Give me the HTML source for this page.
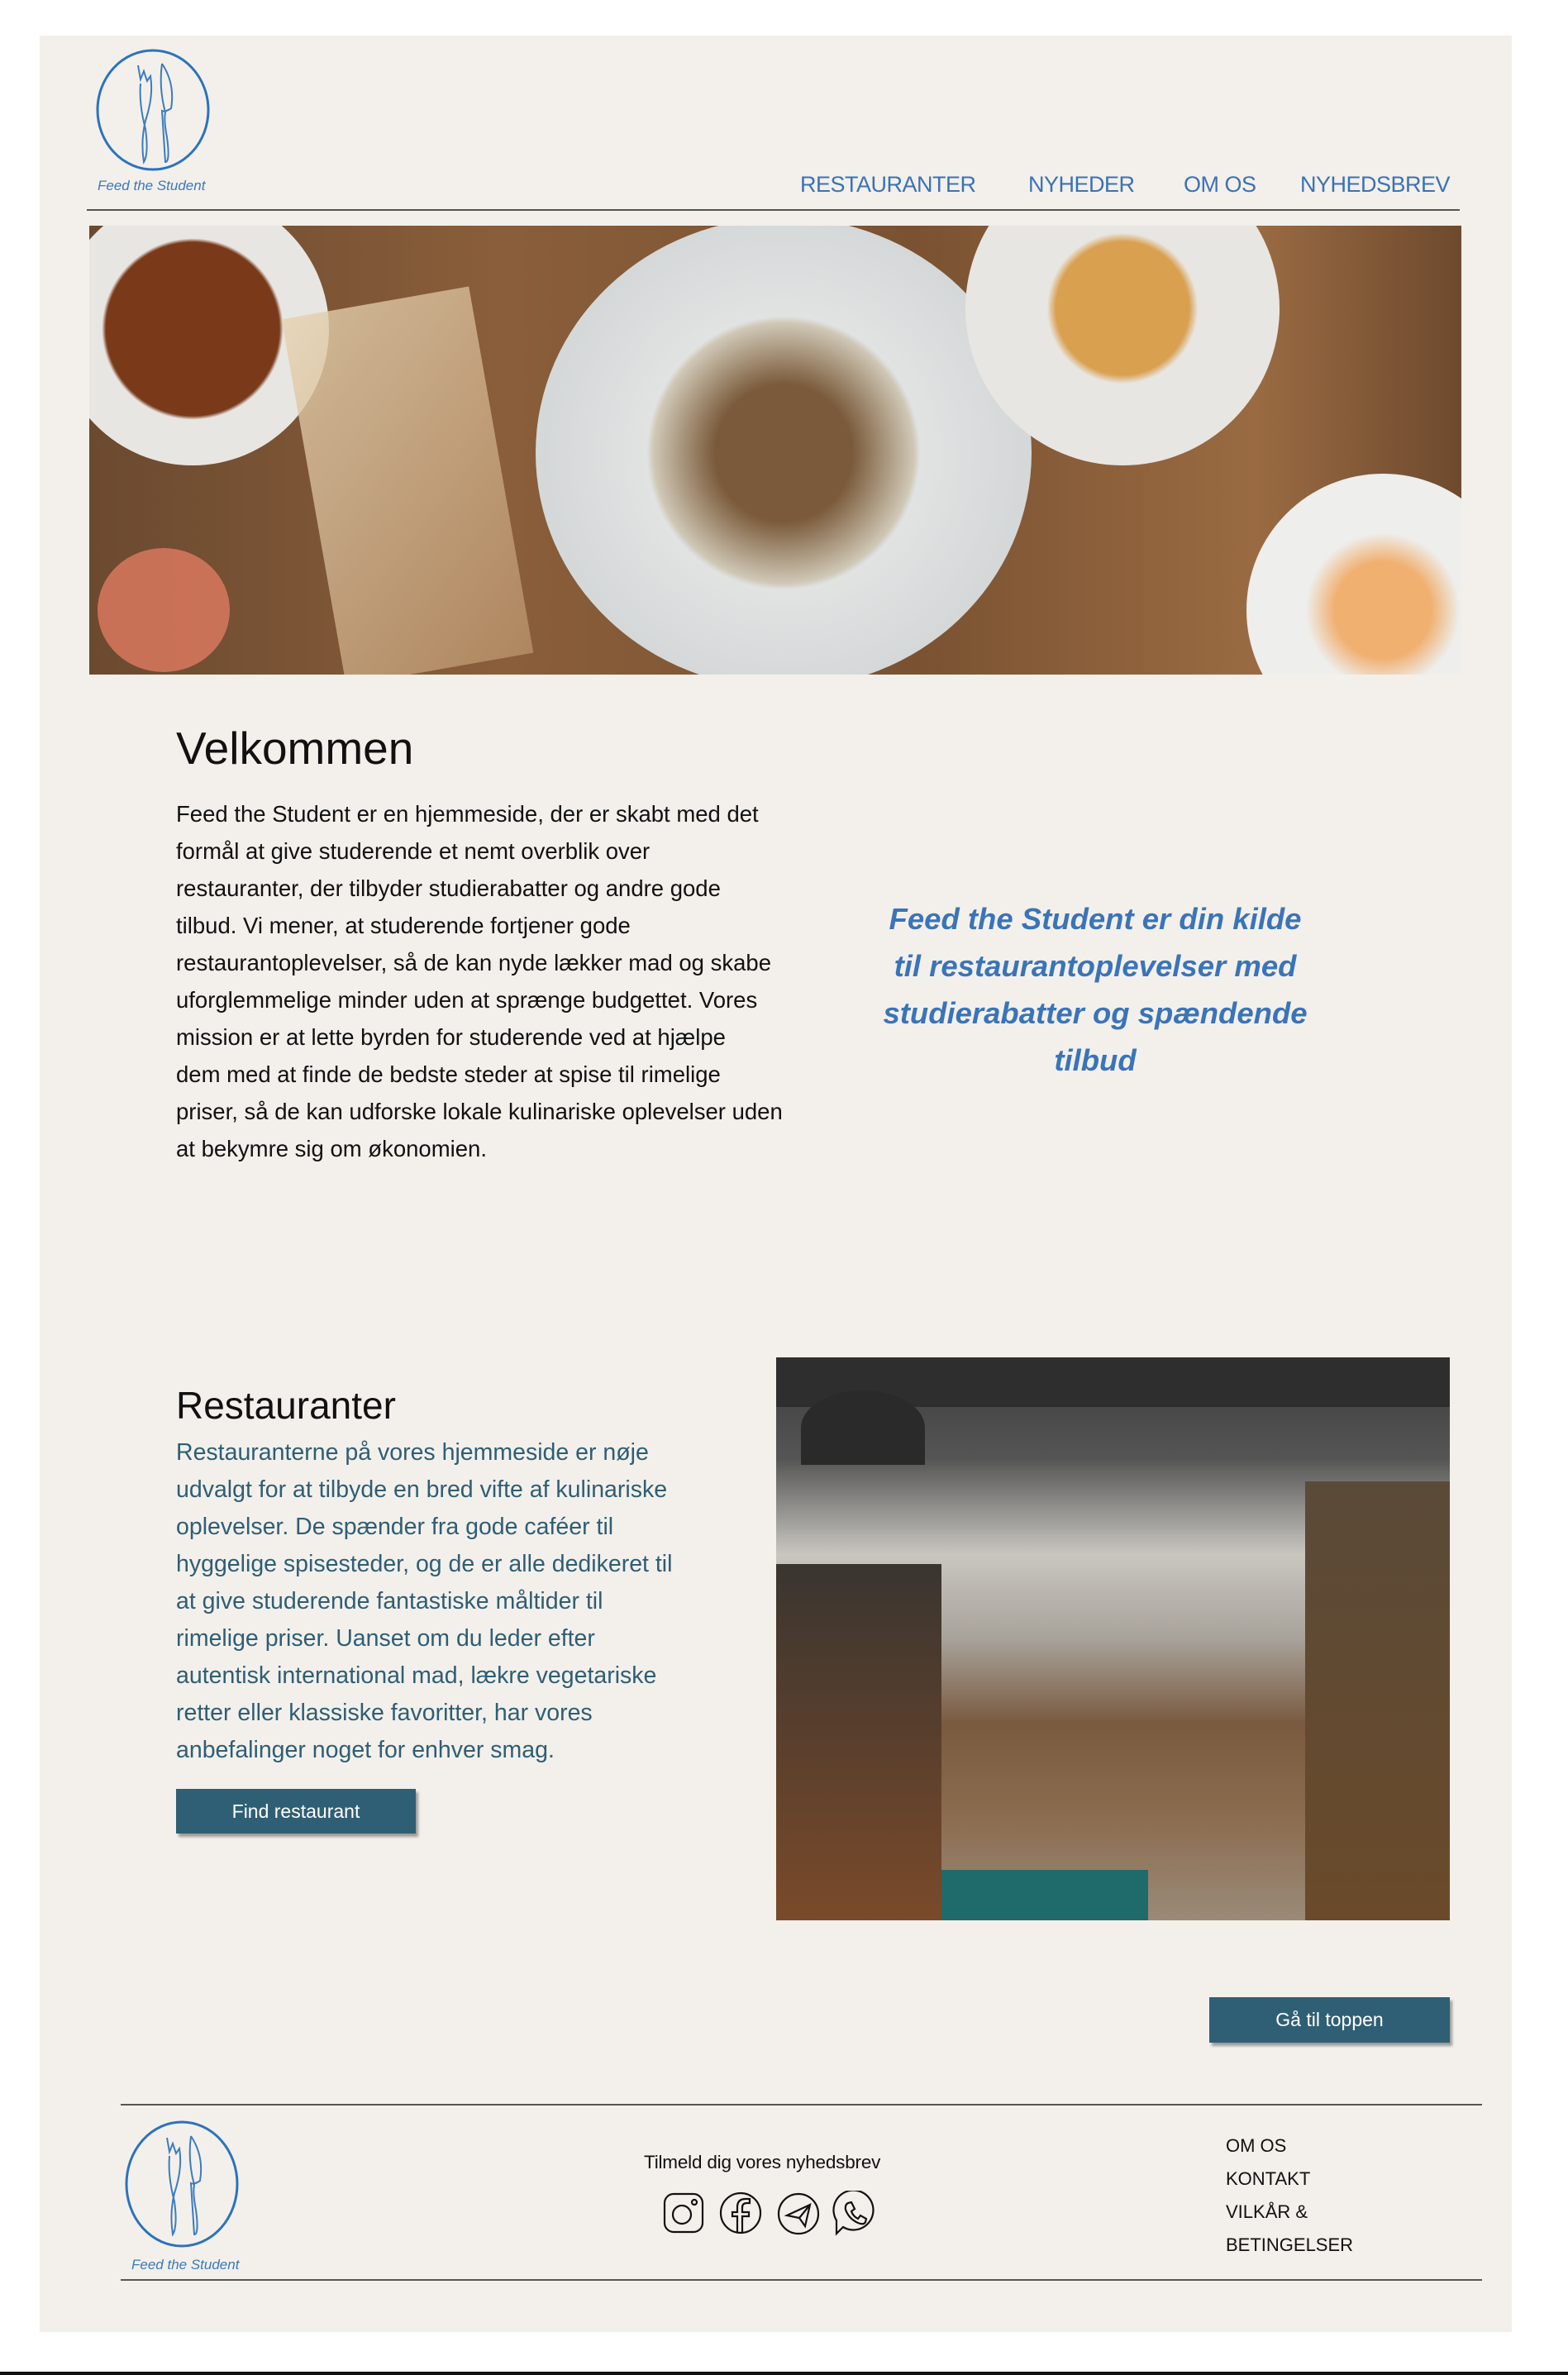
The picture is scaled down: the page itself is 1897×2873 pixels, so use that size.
<!DOCTYPE html>
<html><head><meta charset="utf-8"><style>
*{margin:0;padding:0;box-sizing:border-box}
body{width:1897px;height:2873px;background:#fff;position:relative;overflow:hidden;font-family:"Liberation Sans",sans-serif}
.card{position:absolute;left:48px;top:43px;width:1781px;height:2778px;background:#f3f0eb}
.a{position:absolute;white-space:nowrap}
.nav{color:#3b72b3;font-size:27px;top:208px;letter-spacing:-0.5px}
.line{position:absolute;height:2px;background:#555}
.p{line-height:45px;color:#111}
.btn{position:absolute;background:#2f5f74;color:#fff;font-size:23px;text-align:center;box-shadow:3px 4px 3px rgba(0,0,0,.35)}
.logotext{font-style:italic;color:#3b79b9;font-size:17px}
.bottom{position:absolute;left:0;top:2869px;width:1897px;height:4px;background:#111}
</style></head><body>
<div class="card"></div>

<svg class="a" style="left:112px;top:56px" width="150" height="155" viewBox="0 0 150 155">
<ellipse cx="73" cy="77" rx="67" ry="72" fill="none" stroke="#2b73bd" stroke-width="3"/>
<path d="M55 23 L58 40 L62 30 L66 42 L70 36 Q74 60 64 90 Q58 115 62 140 Q68 130 64 100 Q56 70 58 45" fill="none" stroke="#3b7cc0" stroke-width="2"/>
<path d="M84 21 Q100 45 95 75 Q88 80 84 78 Q86 110 88 140 Q94 140 90 110 Q86 90 88 80 Q80 50 84 21" fill="none" stroke="#3b7cc0" stroke-width="2"/>
</svg>
<div class="a logotext" style="left:118px;top:215px">Feed the Student</div>

<div class="a nav" style="left:968px">RESTAURANTER</div>
<div class="a nav" style="left:1244px">NYHEDER</div>
<div class="a nav" style="left:1432px">OM OS</div>
<div class="a nav" style="left:1573px">NYHEDSBREV</div>
<div class="line" style="left:105px;top:253px;width:1661px"></div>

<div class="a" style="left:108px;top:273px;width:1660px;height:543px;overflow:hidden;background:linear-gradient(90deg,#6b4a30,#8a5e3a 30%,#7a5232 60%,#9a6b42 85%,#6e4a2e)">
 <div class="a" style="left:-40px;top:-40px;width:330px;height:330px;border-radius:50%;background:radial-gradient(circle,#7a3a1a 45%,#e8e6e2 47%)"></div>
 <div class="a" style="left:540px;top:-10px;width:600px;height:570px;border-radius:50%;background:radial-gradient(circle,#7a5a3a 20%,#cfc7b5 38%,#e1e3e3 40%,#d5d8d8 70%)"></div>
 <div class="a" style="left:1060px;top:-90px;width:380px;height:380px;border-radius:50%;background:radial-gradient(circle,#d9a050 30%,#e8e6e2 34%)"></div>
 <div class="a" style="left:1400px;top:300px;width:330px;height:330px;border-radius:50%;background:radial-gradient(circle,#f0b070 25%,#eeeeec 40%)"></div>
 <div class="a" style="left:270px;top:90px;width:230px;height:450px;background:linear-gradient(135deg,#e6d2b0,#b89068);transform:rotate(-10deg);opacity:.8"></div>
 <div class="a" style="left:10px;top:390px;width:160px;height:150px;border-radius:50%;background:#e07a60;opacity:.8"></div>
</div>

<div class="a" style="left:213px;top:873px;font-size:55px;color:#111">Velkommen</div>
<div class="a p" style="left:213px;top:962px;font-size:27.5px">Feed the Student er en hjemmeside, der er skabt med det<br>formål at give studerende et nemt overblik over<br>restauranter, der tilbyder studierabatter og andre gode<br>tilbud. Vi mener, at studerende fortjener gode<br>restaurantoplevelser, så de kan nyde lækker mad og skabe<br>uforglemmelige minder uden at sprænge budgettet. Vores<br>mission er at lette byrden for studerende ved at hjælpe<br>dem med at finde de bedste steder at spise til rimelige<br>priser, så de kan udforske lokale kulinariske oplevelser uden<br>at bekymre sig om økonomien.</div>
<div class="a" style="left:1005px;top:1083px;width:640px;text-align:center;font-size:36.5px;line-height:57px;font-style:italic;font-weight:bold;color:#3a74b8">Feed the Student er din kilde<br>til restaurantoplevelser med<br>studierabatter og spændende<br>tilbud</div>

<div class="a" style="left:213px;top:1673px;font-size:46px;color:#111">Restauranter</div>
<div class="a p" style="left:213px;top:1735px;color:#2f5e74;font-size:28.5px">Restauranterne på vores hjemmeside er nøje<br>udvalgt for at tilbyde en bred vifte af kulinariske<br>oplevelser. De spænder fra gode caféer til<br>hyggelige spisesteder, og de er alle dedikeret til<br>at give studerende fantastiske måltider til<br>rimelige priser. Uanset om du leder efter<br>autentisk international mad, lækre vegetariske<br>retter eller klassiske favoritter, har vores<br>anbefalinger noget for enhver smag.</div>
<div class="btn" style="left:213px;top:2164px;width:290px;height:54px;line-height:54px">Find restaurant</div>

<div class="a" style="left:939px;top:1642px;width:815px;height:681px;overflow:hidden;background:linear-gradient(180deg,#3c3c3c 0%,#555 18%,#c9c6c0 35%,#a8a29a 50%,#7a5a40 65%,#8a6a4c 80%,#9a8a78 100%)">
 <div class="a" style="left:0;top:0;width:815px;height:60px;background:#2e2e2e"></div>
 <div class="a" style="left:0;top:250px;width:200px;height:431px;background:linear-gradient(180deg,#3a3530,#7a4a2a)"></div>
 <div class="a" style="left:640px;top:150px;width:175px;height:531px;background:linear-gradient(180deg,#5a4a38,#6a4a2a)"></div>
 <div class="a" style="left:30px;top:40px;width:150px;height:90px;border-radius:50% 50% 0 0;background:#2a2a2a"></div>
 <div class="a" style="left:200px;top:620px;width:250px;height:61px;background:#1f6a6a"></div>
</div>

<div class="btn" style="left:1463px;top:2416px;width:291px;height:55px;line-height:55px">Gå til toppen</div>

<div class="line" style="left:146px;top:2545px;width:1647px"></div>
<svg class="a" style="left:147px;top:2563px" width="150" height="160" viewBox="0 0 150 160">
<ellipse cx="73" cy="79" rx="67" ry="75" fill="none" stroke="#2b73bd" stroke-width="3"/>
<path d="M55 23 L58 40 L62 30 L66 42 L70 36 Q74 60 64 90 Q58 115 62 140 Q68 130 64 100 Q56 70 58 45" fill="none" stroke="#3b7cc0" stroke-width="2"/>
<path d="M84 21 Q100 45 95 75 Q88 80 84 78 Q86 110 88 140 Q94 140 90 110 Q86 90 88 80 Q80 50 84 21" fill="none" stroke="#3b7cc0" stroke-width="2"/>
</svg>
<div class="a logotext" style="left:159px;top:2730px">Feed the Student</div>

<div class="a" style="left:779px;top:2603px;font-size:22.5px;color:#111;letter-spacing:-0.2px">Tilmeld dig vores nyhedsbrev</div>
<svg class="a" style="left:800px;top:2650px" width="265" height="58" viewBox="0 0 265 58" fill="none" stroke="#111" stroke-width="2.2">
<rect x="4" y="4" width="46" height="46" rx="11"/><circle cx="25" cy="29" r="11"/><circle cx="40" cy="14" r="3"/>
<circle cx="96" cy="27" r="24"/><path d="M98 51 V31 H106 V26 H98 V20 Q98 15 104 15 H107 V10 H102 Q92 10 92 20 V26 H86 V31 H92 V51"/>
<circle cx="166" cy="28" r="24"/><path d="M152 30 L180 17 L174 43 L167 33 Z M167 33 L180 17"/>
<path d="M220 44 A24 24 0 1 0 212 36 L212 52 Z"/>
<path d="M226 15 L230 14 L234 22 L230 25 Q232 31 238 34 L241 30 L248 34 L247 38 Q245 42 238 39 Q227 34 223 23 Q222 17 226 15 Z"/>
</svg>
<div class="a" style="left:1483px;top:2576px;font-size:22px;line-height:40px;color:#111">OM OS<br>KONTAKT<br>VILKÅR &amp;<br>BETINGELSER</div>
<div class="line" style="left:146px;top:2757px;width:1647px"></div>

<div class="bottom"></div>
</body></html>
